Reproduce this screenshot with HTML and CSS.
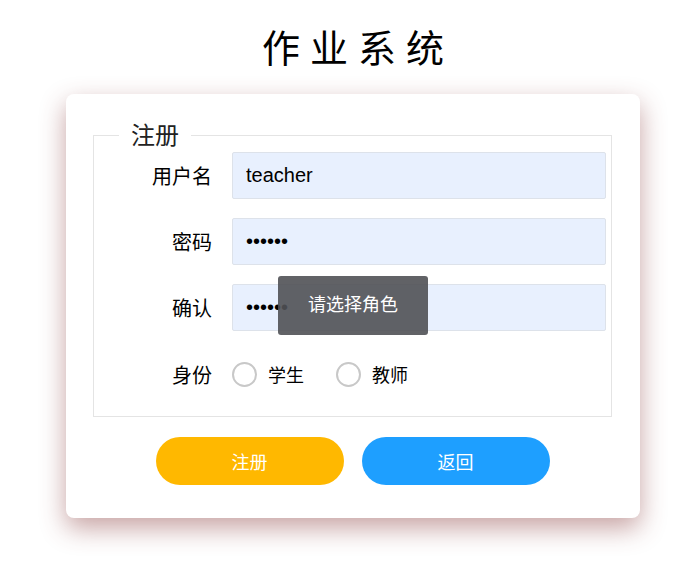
FILE: index.html
```html
<!DOCTYPE html>
<html lang="zh">
<head>
<meta charset="utf-8">
<title>作业系统</title>
<link rel="stylesheet" href="styles.css">
</head>
<body>
<div class="page">
  <h1 class="title">作业系统</h1>
  <div class="card">
    <fieldset class="box">
      <legend class="legend">注册</legend>
      <div class="rows">
        <label class="label">用户名</label>
        <input class="field" type="text" value="teacher">
        <label class="label">密码</label>
        <input class="field" type="password" value="123456">
        <label class="label">确认</label>
        <div class="confirm">
          <input class="field" type="password" value="123456">
          <div class="tip">请选择角色</div>
        </div>
        <label class="label role">身份</label>
        <div class="radios">
          <span class="radio"><span class="circle"></span><span class="rtext">学生</span></span>
          <span class="radio"><span class="circle"></span><span class="rtext">教师</span></span>
        </div>
      </div>
    </fieldset>
    <div class="actions">
      <button class="btn btn-reg">注册</button>
      <button class="btn btn-back">返回</button>
    </div>
  </div>
</div>
</body>
</html>
```

FILE: styles.css
```css
* { box-sizing: border-box; }
html, body { margin: 0; padding: 0; background: #fff; }
body {
  font-family: "Liberation Sans", "Noto Sans CJK SC", sans-serif;
  color: #000;
  height: 565px;
  overflow: hidden;
}
.page {
  width: 574px;
  margin-left: 66px;
  padding-bottom: 47px;
}
.title {
  margin: 26px 0 22px;
  height: 46px;
  line-height: 46px;
  font-size: 38px;
  font-weight: normal;
  letter-spacing: 10px;
  text-indent: 10px;
  text-align: center;
}
.card {
  background: #fff;
  border-radius: 8px;
  box-shadow: 0 10px 26px rgba(130, 50, 50, 0.45);
  padding: 26px 28px 34px 27px;
  height: 424px;
}
.box {
  margin: 0;
  border: 1px solid #e4e4e4;
  padding: 0 5px 18px 0;
  min-width: 0;
}
.legend {
  margin-left: 25px;
  padding: 0 12px;
  font-size: 24px;
  line-height: 31px;
  color: #222;
}
.rows {
  display: grid;
  grid-template-columns: 118px 1fr;
  column-gap: 20px;
  row-gap: 19px;
  align-items: center;
  margin-top: 1px;
}
.label {
  text-align: right;
  font-size: 20px;
}
.field {
  display: block;
  width: 100%;
  height: 47px;
  border: 1px solid #dde2ea;
  border-radius: 2px;
  background: #e8f0fe;
  padding: 0 13px;
  font-family: "Liberation Sans", "Noto Sans CJK SC", sans-serif;
  font-size: 20px;
  color: #000;
  outline: none;
}
.confirm { position: relative; }
.tip {
  position: absolute;
  left: 46px;
  top: -8px;
  width: 150px;
  height: 59px;
  line-height: 59px;
  background: rgba(80, 81, 85, 0.9);
  border-radius: 3px;
  color: #fff;
  text-align: center;
  font-size: 18px;
}
.radios {
  display: flex;
  align-items: center;
  height: 48px;
  gap: 32px;
}
.radio {
  display: flex;
  align-items: center;
  gap: 11px;
}
.circle {
  width: 25px;
  height: 25px;
  border: 2px solid #c8c8c8;
  border-radius: 50%;
  background: #fff;
}
.rtext { font-size: 18px; }
.actions {
  display: flex;
  justify-content: center;
  gap: 18px;
  margin-top: 20px;
}
.btn {
  width: 188px;
  height: 48px;
  border: none;
  border-radius: 24px;
  color: #fff;
  font-family: "Liberation Sans", "Noto Sans CJK SC", sans-serif;
  font-size: 18px;
}
.btn-reg { background: #ffb800; }
.btn-back { background: #1e9fff; }
```
